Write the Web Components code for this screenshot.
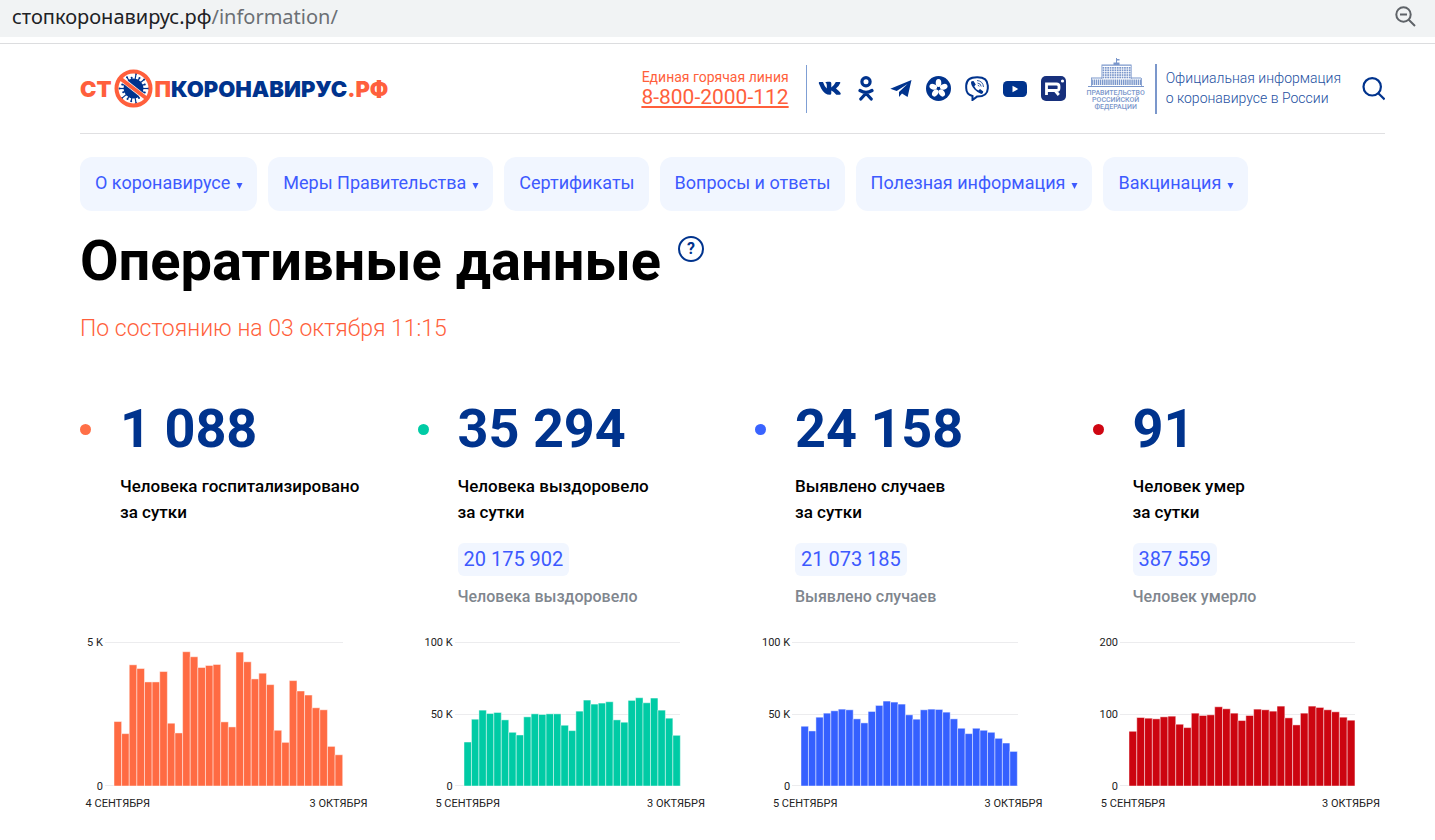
<!DOCTYPE html>
<html lang="ru">
<head>
<meta charset="utf-8">
<meta name="viewport" content="width=device-width, initial-scale=1">
<title>Стопкоронавирус.рф</title>
<style>
  html { --navy: #00338d; --coral: #ff5f3c; --link: #3d5afe; --tint: #f1f6ff; }
  body { margin: 0; background: #fff; color: #000; font-family: Roboto, "Noto Sans", sans-serif; }
  main { display: block; padding: 0 50px 0 80px; }
</style>
</head>
<body>
<address-bar>стопкоронавирус.рф<span slot="path">/information/</span></address-bar>
<main>
  <site-header>
    <site-logo slot="logo"></site-logo>
    <hot-line slot="tools" phone="8-800-2000-112">Единая горячая линия</hot-line>
    <social-links slot="tools"></social-links>
    <gov-emblem slot="tools"></gov-emblem>
    <search-button slot="tools"></search-button>
  </site-header>
  <site-nav>
    <nav-item menu>О коронавирусе</nav-item>
    <nav-item menu>Меры Правительства</nav-item>
    <nav-item>Сертификаты</nav-item>
    <nav-item>Вопросы и ответы</nav-item>
    <nav-item menu>Полезная информация</nav-item>
    <nav-item menu>Вакцинация</nav-item>
  </site-nav>
  <page-title>Оперативные данные<span slot="date">По состоянию на 03 октября 11:15</span></page-title>
  <stat-grid>
    <stat-card value="1 088" dot="#ff6f47">Человека госпитализировано<br>за сутки
      <bar-chart slot="chart" color="#ff6b43" labels="5 K,0" max="429" from="4 СЕНТЯБРЯ" to="3 ОКТЯБРЯ" values="192,156,361,350,310,310,341,187,158,400,385,353,359,362,191,176,399,370,319,336,302,166,130,314,283,271,233,227,118,93"></bar-chart>
    </stat-card>
    <stat-card value="35 294" dot="#00cba5" total="20 175 902" caption="Человека выздоровело">Человека выздоровело<br>за сутки
      <bar-chart slot="chart" color="#00cba5" labels="100 K,50 K,0" max="429" from="5 СЕНТЯБРЯ" to="3 ОКТЯБРЯ" values="131,199,226,216,219,197,160,152,206,215,213,215,215,181,165,223,256,244,247,251,197,190,255,263,248,262,226,202,151"></bar-chart>
    </stat-card>
    <stat-card value="24 158" dot="#3963ff" total="21 073 185" caption="Выявлено случаев">Выявлено случаев<br>за сутки
      <bar-chart slot="chart" color="#3560ff" labels="100 K,50 K,0" max="429" from="5 СЕНТЯБРЯ" to="3 ОКТЯБРЯ" values="178,164,205,217,224,229,227,200,188,222,240,253,250,244,212,199,227,229,228,220,200,172,156,172,166,160,142,128,103"></bar-chart>
    </stat-card>
    <stat-card value="91" dot="#cf0612" total="387 559" caption="Человек умерло">Человек умер<br>за сутки
      <bar-chart slot="chart" color="#cc0510" labels="200,100,0" max="429" from="5 СЕНТЯБРЯ" to="3 ОКТЯБРЯ" values="163,204,202,200,206,208,184,174,217,210,212,236,230,217,195,210,229,227,223,238,203,182,217,238,234,227,221,205,196"></bar-chart>
    </stat-card>
  </stat-grid>
</main>
<script>
class Base extends HTMLElement {
  connectedCallback() {
    if (!this.shadowRoot) this.attachShadow({ mode: "open" }).innerHTML = this.view();
  }
  attr(name) { return this.getAttribute(name) || ""; }
}

customElements.define("address-bar", class extends Base {
  view() { return `
<style>
  :host { display: block; border-bottom: 1px solid #dcdddf; padding-bottom: 6px; }
  div { display: flex; align-items: center; justify-content: space-between; height: 37px; padding: 0 19px 4px 12px; box-sizing: border-box; background: #f1f3f4; }
  a { font: 20px/28px "Noto Sans", sans-serif; color: #202124; text-decoration: none; white-space: nowrap; }
  ::slotted(span) { color: #6b6f74; }
  button { display: block; padding: 0; border: 0; background: none; }
  svg { display: block; }
</style>
<div>
  <a href="#"><slot></slot><slot name="path"></slot></a>
  <button aria-label="Масштаб"><svg width="21" height="22" viewBox="0 0 21 22" fill="none" stroke="#5f6368" stroke-width="2"><circle cx="8.500" cy="8.500" r="7.200"/><path d="M5 8.500h7M13.500 13.500l6.500 6.500"/></svg></button>
</div>`; }
});

customElements.define("site-header", class extends Base {
  view() { return `
<style>
  :host { display: block; }
  header { display: flex; align-items: center; justify-content: space-between; height: 89px; border-bottom: 1px solid #e0e0e2; }
  .tools { display: flex; align-items: center; }
</style>
<header><slot name="logo"></slot><div class="tools"><slot name="tools"></slot></div></header>`; }
});

customElements.define("site-logo", class extends Base {
  view() {
    let spikes = "";
    const lens = [15, 12, 14, 11, 15, 13, 12, 15, 11, 14, 12, 15, 13, 11, 15, 12, 14, 12];
    lens.forEach((l, i) => {
      const a = i * 20 * Math.PI / 180, x = (19.5 + l * Math.cos(a)).toFixed(1), y = (19.5 + l * Math.sin(a)).toFixed(1);
      spikes += `<path d="M19.500 19.500L${x} ${y}" stroke="#00338d" stroke-width="1.200"/><circle cx="${x}" cy="${y}" r="1" fill="#00338d"/>`;
    });
    return `
<style>
  :host { display: block; }
  a { display: flex; align-items: center; font: 900 22px/26px Inter, sans-serif; color: var(--coral); text-decoration: none; }
  svg { display: block; margin: 0 2px; }
  b { font-weight: 900; color: var(--navy); }
</style>
<a href="#"><span>СТ</span><svg width="39" height="39" viewBox="0 0 39 39">${spikes}<circle cx="19.500" cy="19.500" r="10" fill="#00338d"/><path d="M7.500 10L31.500 29" stroke="#fff" stroke-width="5"/><path d="M7 10L32 29" stroke="#ff5f3c" stroke-width="4"/><circle cx="19.500" cy="19.500" r="17" fill="none" stroke="#ff5f3c" stroke-width="4"/></svg><span>П<b>КОРОНАВИРУС</b>.РФ</span></a>`;
  }
});

customElements.define("hot-line", class extends Base {
  view() { return `
<style>
  :host { display: block; padding: 0 17px 0 0; border-right: 1px solid #7f9fd4; color: var(--coral); text-align: right; }
  div { height: 48px; display: flex; flex-direction: column; justify-content: center; box-sizing: border-box; padding-bottom: 2px; }
  span { font-size: 14px; line-height: 18px; }
  a { color: inherit; font-size: 21px; line-height: 22px; text-decoration: underline; text-decoration-thickness: 2px; text-underline-offset: 2px; text-decoration-skip-ink: none; }
</style>
<div><span><slot></slot></span><a href="tel:${this.attr("phone")}">${this.attr("phone")}</a></div>`; }
});

customElements.define("social-links", class extends Base {
  view() {
    const petals = [0, 72, 144, 216, 288].map(a => `<ellipse cx="12.500" cy="7" rx="2.800" ry="3.900" fill="#fff" transform="rotate(${a} 12.500 12.500)"/>`).join("");
    const icons = [
      ["ВКонтакте", 24, `<path d="M1.500 6H5Q6.500 10.500 8.800 12.500V9Q8.800 7.500 7.300 6.600Q8 5.800 9.500 5.800H12Q13.300 5.900 13.300 7.300V11.500Q15.800 10 17.800 6H21.500Q22.600 6 22.300 7Q21.300 9.500 18 12.600Q20.500 14.600 22.600 17Q23.300 18.700 21.700 18.800H18.300Q15.500 15.700 13.300 14.600V17.200Q13.200 18.800 12 18.800Q6.500 18.800 3.200 12.500L.8 7.200Q.7 6.100 1.500 6Z" fill="#00338d"/>`],
      ["Одноклассники", 20, `<g fill="none" stroke="#00338d" stroke-width="3.200" stroke-linecap="round"><circle cx="10" cy="5.700" r="4.100"/><path d="M4 14.500Q10 18 16 14.500M10 17.200L4.800 23M10 17.200L15.200 23"/></g>`],
      ["Telegram", 22, `<path d="M21.500 4L.3 12.800L6.700 15L17.500 8L9 16V21L12 17.600L17.600 21Z" fill="#00338d"/>`],
      ["Яндекс Мессенджер", 25, `<circle cx="12.500" cy="12.500" r="12.500" fill="#00338d"/>${petals}<circle cx="12.500" cy="12.500" r="1.400" fill="#00338d"/>`],
      ["Viber", 24, `<path d="M12 1.200Q22.500 1 22.800 9.500V12.500Q22.500 20.700 12 20.600L7.500 24V20Q1.200 18.500 1.200 12V9.500Q1.500 1.200 12 1.200Z" fill="none" stroke="#00338d" stroke-width="2"/><path d="M6.500 5.300L8.500 5L10.800 8.500L9.300 10.300Q10.500 13.300 13.400 14.500L15 13L18.300 15.500Q18.200 17.500 16.300 18Q13 17 9.500 13.500Q6 9.500 6 6.500Z" fill="#00338d"/><path d="M12 4.500Q18 5 18.500 11M12.500 7Q16 7.500 16.200 10.500M12.800 9.200Q14 9.300 14.200 10.500" fill="none" stroke="#00338d" stroke-width=".8"/>`],
      ["YouTube", 24, `<rect y="5" width="24" height="16" rx="4.500" fill="#00338d"/><path d="M9.500 9.800V16.200L15.300 13Z" fill="#fff"/>`],
      ["Rutube", 25, `<rect width="25" height="25" rx="5" fill="#17307c"/><path d="M5.500 19V8H15.500Q18 8 18 10.300V12.200Q18 14.500 15.500 14.500H5.500M14 14.500L17.800 19" fill="none" stroke="#fff" stroke-width="2.800"/><circle cx="21.500" cy="5" r="1.600" fill="#fff"/>`]
    ];
    return `
<style>
  :host { display: block; padding-left: 11px; }
  nav { display: flex; gap: 14px; align-items: center; }
  a, svg { display: block; }
</style>
<nav>${icons.map(([n, w, s]) => `<a href="#" aria-label="${n}"><svg width="${w}" height="25" viewBox="0 0 ${w} 25">${s}</svg></a>`).join("")}</nav>`;
  }
});

customElements.define("gov-emblem", class extends Base {
  view() {
    let s = "";
    for (let y = 0; y < 5; y++) for (let x = 0; x < 12; x++) s += `<rect x="${14.5 + x * 2.4}" y="${9 + y * 2.4}" width="1.700" height="1.700"/>`;
    for (let x = 0; x < 24; x++) s += `<rect x="${3.500 + x * 2.1}" y="21.500" width="1.400" height="5.500"/>`;
    return `
<style>
  :host { display: block; padding-left: 22px; }
  div { display: flex; align-items: center; }
  figure { margin: 0; width: 56px; padding-right: 11px; border-right: 2px solid #7b97cb; height: 50px; display: flex; flex-direction: column; align-items: center; justify-content: flex-end; }
  figcaption { font-size: 7px; line-height: 7px; font-weight: 500; color: #7b97cb; text-align: center; white-space: nowrap; padding-bottom: 3px; }
  svg { display: block; flex: none; }
  p { margin: 0; padding: 0 0 2px 9px; font-size: 14px; line-height: 20px; font-weight: 300; color: #24509f; white-space: nowrap; }
</style>
<div>
  <figure>
    <svg width="56" height="32" viewBox="0 0 56 32" fill="#7b97cb"><path d="M28 0h1v6h-1zM29 1h2.500v1.500H29zM25.500 4.500h6v2h-6zM13.500 6.500h30v1.200h-30zM13.500 7h.8v14h-.8zM42.800 7h.8v14h-.8zM3 19.500h11v1H3zM43 19.500h10v1H43zM3 20h.8v8H3zM53 20h.8v8H53zM0 28h56v1H0z"/>${s}</svg>
    <figcaption>ПРАВИТЕЛЬСТВО<br>РОССИЙСКОЙ<br>ФЕДЕРАЦИИ</figcaption>
  </figure>
  <p>Официальная информация<br>о коронавирусе в России</p>
</div>`;
  }
});

customElements.define("search-button", class extends Base {
  view() { return `
<style>
  :host { display: block; padding-left: 21px; }
  button { display: block; padding: 0; border: 0; background: none; }
  svg { display: block; }
</style>
<button aria-label="Поиск"><svg width="23" height="24" viewBox="0 0 23 24" fill="none" stroke="#00338d" stroke-width="2.200"><circle cx="10.200" cy="9.800" r="8.700"/><path d="M16.300 16.200l6.300 6.300"/></svg></button>`; }
});

customElements.define("site-nav", class extends Base {
  view() { return `
<style>
  :host { display: block; padding-top: 23px; }
  nav { display: flex; gap: 11px; }
</style>
<nav><slot></slot></nav>`; }
});

customElements.define("nav-item", class extends Base {
  view() { return `
<style>
  :host { display: block; }
  a { display: flex; gap: 6px; align-items: baseline; padding: 13px 14px 15px 15px; border-radius: 12px; background: var(--tint); color: var(--link); font-size: 18px; line-height: 26px; height: 26px; text-decoration: none; white-space: nowrap; }
  svg { display: block; }
</style>
<a href="#"><slot></slot>${this.hasAttribute("menu") ? `<svg width="7" height="6" viewBox="0 0 7 6"><path d="M.5 0h6L3.500 6z" fill="#3d5afe"/></svg>` : ""}</a>`; }
});

customElements.define("page-title", class extends Base {
  view() { return `
<style>
  :host { display: block; padding-top: 17px; }
  div { display: flex; align-items: flex-start; gap: 17px; }
  h1 { margin: 0; font-size: 56px; line-height: 66px; font-weight: 700; }
  button { box-sizing: border-box; width: 26px; height: 26px; margin-top: 8px; padding: 0; border: 2px solid var(--navy); border-radius: 50%; background: none; color: var(--navy); font: 700 16px/22px Roboto, sans-serif; }
  p { margin: 20px 0 0; font-size: 23px; line-height: 30px; font-weight: 300; color: var(--coral); }
</style>
<div><h1><slot></slot></h1><button aria-label="Справка">?</button></div>
<p><slot name="date"></slot></p>`; }
});

customElements.define("stat-grid", class extends Base {
  view() { return `
<style>
  :host { display: grid; grid-template-columns: repeat(4, minmax(0, 1fr)); gap: 45px; padding-top: 55px; }
</style>
<slot></slot>`; }
});

customElements.define("stat-card", class extends Base {
  view() {
    const total = this.attr("total");
    return `
<style>
  :host { display: flex; flex-direction: column; }
  .body { display: grid; grid-template-columns: 11px 1fr; column-gap: 29px; }
  i { width: 11px; height: 11px; border-radius: 50%; margin-top: 25px; background: ${this.attr("dot")}; }
  strong { display: block; font-size: 54px; line-height: 60px; font-weight: 700; color: var(--navy); white-space: nowrap; }
  p { margin: 14px 0 18px; font-size: 17px; line-height: 26px; font-weight: 500; white-space: nowrap; }
  a { display: inline-block; padding: 0 6px; border-radius: 6px; background: var(--tint); color: var(--link); font-size: 20px; line-height: 33px; text-decoration: none; }
  small { display: block; margin-top: 11px; font-size: 16px; line-height: 20px; font-weight: 500; color: #7f868e; white-space: nowrap; }
  .chart { margin-top: auto; padding-top: 35px; }
</style>
<div class="body"><i></i><div>
  <strong>${this.attr("value")}</strong>
  <p><slot></slot></p>
  ${total ? `<a href="#">${total}</a><small>${this.attr("caption")}</small>` : ""}
</div></div>
<div class="chart"><slot name="chart"></slot></div>`;
  }
});

customElements.define("bar-chart", class extends Base {
  view() {
    const v = this.attr("values").split(",").map(Number), max = +this.attr("max"), labels = this.attr("labels").split(",");
    const bars = v.map((n, i) => `<rect x="${i}" y="${max - n}" width="1" height="${n}"/>`).join("");
    return `
<style>
  :host { display: block; color: #222; font-size: 11px; line-height: 16px; font-weight: 400; }
  .box { display: grid; grid-template-columns: auto 1fr; column-gap: 2px; padding: 0 30px 0 7px; }
  .y { display: flex; flex-direction: column; justify-content: space-between; text-align: right; margin: -7px 0 -9px; white-space: nowrap; }
  .lines, svg { grid-area: 1 / 2; height: 144px; }
  .lines { display: flex; flex-direction: column; justify-content: space-between; }
  .lines span { height: 1px; background: #ececee; }
  .plot { grid-area: 1 / 2; padding-left: 9px; }
  svg { display: block; width: 100%; overflow: visible; }
  rect { fill: ${this.attr("color")}; stroke: rgba(255, 255, 255, .45); stroke-width: 1px; vector-effect: non-scaling-stroke; }
  .x { grid-column: 2; display: flex; justify-content: space-between; padding-left: 9px; margin-top: 10px; }
  .x span { display: flex; justify-content: center; width: 8px; white-space: nowrap; }
</style>
<div class="box">
  <div class="y">${labels.map(l => `<span>${l}</span>`).join("")}</div>
  <div class="lines">${labels.map(() => "<span></span>").join("")}</div>
  <div class="plot"><svg viewBox="0 0 ${v.length} ${max}" preserveAspectRatio="none">${bars}</svg></div>
  <div class="x"><span>${this.attr("from")}</span><span>${this.attr("to")}</span></div>
</div>`;
  }
});
</script>
</body>
</html>
